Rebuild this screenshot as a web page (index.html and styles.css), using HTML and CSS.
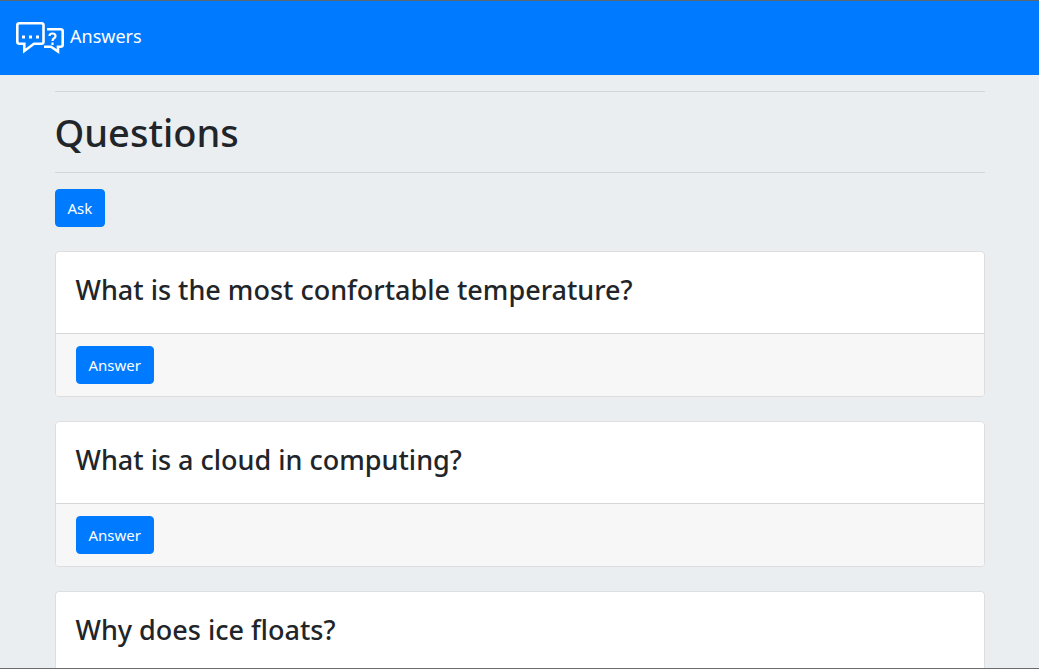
FILE: index.html
```html
<!DOCTYPE html>
<html lang="en">
<head>
<meta charset="utf-8">
<meta name="viewport" content="width=device-width, initial-scale=1">
<title>Answers</title>
<link rel="stylesheet" href="styles.css">
</head>
<body>
<div class="window">
  <nav class="navbar">
    <a class="brand" href="#">
      <svg class="brand-icon" viewBox="0 0 48 48" fill="none" stroke="#fff" stroke-width="2.600" aria-hidden="true">
        <path d="M3.500 9.200H25.500Q27.500 9.200 27.500 11.200V27.800Q27.500 29.800 25.500 29.800H18L8.300 37V29.800H3.500Q1.300 29.800 1.300 27.800V11.200Q1.300 9.200 3.500 9.200Z"/>
        <path d="M31 15.300H44.500Q46.700 15.300 46.700 17.300V30.700Q46.700 32.700 44.500 32.700H42V37.500L35 32.700H28"/>
        <path d="M6 23H9M13 23H16M20 23H23" stroke-width="3"/>
        <path d="M33.500 22Q33.500 19.500 36.500 19.500Q39.500 19.500 39.500 22Q39.500 23.500 38 24.300Q36.500 25.200 36.500 27M36.500 28.500V31" stroke-width="2.200"/>
      </svg>
      <span>Answers</span>
    </a>
  </nav>
  <main class="container">
    <hr class="rule">
    <h1 class="title">Questions</h1>
    <hr class="rule">
    <button class="btn" type="button">Ask</button>
    <section class="questions">
      <article class="card">
        <div class="card-body"><h3 class="card-title">What is the most confortable temperature?</h3></div>
        <div class="card-footer"><button class="btn" type="button">Answer</button></div>
      </article>
      <article class="card">
        <div class="card-body"><h3 class="card-title">What is a cloud in computing?</h3></div>
        <div class="card-footer"><button class="btn" type="button">Answer</button></div>
      </article>
      <article class="card">
        <div class="card-body"><h3 class="card-title">Why does ice floats?</h3></div>
      </article>
    </section>
  </main>
</div>
</body>
</html>
```

FILE: styles.css
```css
* { box-sizing: border-box; }

body {
  margin: 0;
  background: #eaeef1;
  color: #212529;
  font-family: "Noto Sans", "Open Sans", sans-serif;
  font-size: 15px;
  line-height: 24px;
}

.window {
  height: 100vh;
  overflow-y: auto;
  scrollbar-width: none;
  border-top: 1px solid #5c6670;
  border-bottom: 1px solid #6c6c6c;
}

.navbar {
  display: flex;
  padding: 8px 16px;
  background: #007bff;
}

.brand {
  display: flex;
  gap: 6px;
  padding: 5px 0;
  color: #fff;
  font-size: 18px;
  line-height: 45px;
  text-decoration: none;
}

.brand-icon {
  width: 48px;
  height: 48px;
}

.container {
  max-width: 960px;
  margin: 0 auto;
  padding: 0 15px 24px;
}

.rule {
  margin: 16px 0;
  border: 0;
  border-top: 1px solid #d2d6d9;
}

.title {
  margin: 0;
  padding-top: 1px;
  font-size: 38px;
  font-weight: 500;
  line-height: 47px;
}

.btn {
  display: block;
  padding: 6px 12px;
  border: 1px solid #007bff;
  border-radius: 4px;
  background: #007bff;
  color: #fff;
  font: inherit;
  cursor: pointer;
}

.questions {
  display: grid;
  gap: 24px;
  margin-top: 24px;
}

.card {
  border: 1px solid #dcdee0;
  border-radius: 4px;
  background: #fff;
  overflow: hidden;
}

.card-body { padding: 20px 20px 26px; }

.card-title {
  margin: 0;
  font-size: 27px;
  font-weight: 500;
  line-height: 35px;
}

.card-footer {
  padding: 12px 20px;
  border-top: 1px solid #d7d7d7;
  background: #f7f7f7;
}
```
